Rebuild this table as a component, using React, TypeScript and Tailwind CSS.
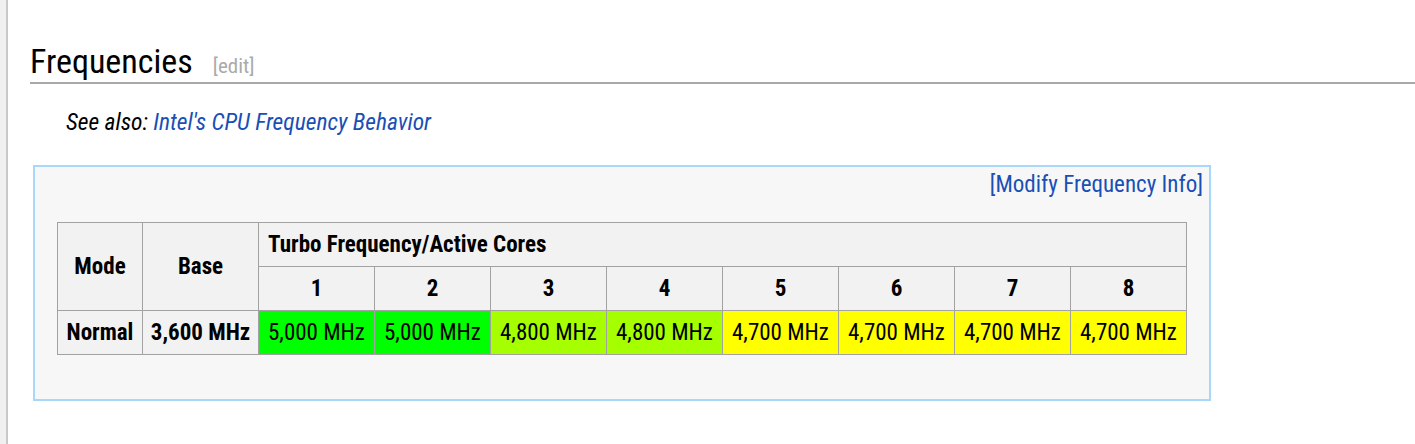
const FONT = { fontFamily: '"Roboto Condensed", Roboto, "Liberation Sans", sans-serif' };

const cores = [
  { n: 1, mhz: '5,000 MHz', bg: 'bg-[#00ff00]' },
  { n: 2, mhz: '5,000 MHz', bg: 'bg-[#00ff00]' },
  { n: 3, mhz: '4,800 MHz', bg: 'bg-[#a6ff00]' },
  { n: 4, mhz: '4,800 MHz', bg: 'bg-[#a6ff00]' },
  { n: 5, mhz: '4,700 MHz', bg: 'bg-[#ffff00]' },
  { n: 6, mhz: '4,700 MHz', bg: 'bg-[#ffff00]' },
  { n: 7, mhz: '4,700 MHz', bg: 'bg-[#ffff00]' },
  { n: 8, mhz: '4,700 MHz', bg: 'bg-[#ffff00]' },
];

export default function App() {
  return (
    <div className="flex min-h-[444px] bg-white text-black" style={FONT}>
      <div className="w-[6px] shrink-0 bg-[#f0f0f0]" />
      <div className="w-[2px] shrink-0 bg-[#c8c8c8]" />
      <div className="flex-1 pl-[22px]">
        <h2 className="mt-[41px] border-b-2 border-[#a8a8a8] pb-[1px] text-[34px] leading-[40px] font-normal">
          Frequencies
          <span className="ml-[20px] text-[21px] leading-none text-[#aaaaaa]">[edit]</span>
        </h2>

        <p className="mt-[24px] pl-[36px] text-[23.5px] leading-[28px] italic">
          See also: <a className="text-[#1a4fb5]">Intel's CPU Frequency Behavior</a>
        </p>

        <div className="mt-[29px] ml-[3px] h-[236px] w-[1178px] border-2 border-[#a7d7f9] bg-[#f7f7f7] pt-[4px]">
          <div className="pr-[6px] text-right text-[23px] leading-[28px] text-[#1a4fb5]">
            [Modify Frequency Info]
          </div>

          <table className="mt-[23px] ml-[22px] table-fixed border-collapse text-[23px] leading-[28px]">
            <colgroup>
              <col className="w-[85px]" />
              <col className="w-[116px]" />
              {cores.map((c) => (
                <col key={c.n} className="w-[116px]" />
              ))}
            </colgroup>
            <thead>
              <tr className="h-[44px] bg-[#f2f2f2]">
                <th rowSpan={2} className="border border-[#a2a2a2] font-bold">Mode</th>
                <th rowSpan={2} className="border border-[#a2a2a2] font-bold">Base</th>
                <th colSpan={8} className="border border-[#a2a2a2] pl-[9px] text-left font-bold">
                  Turbo Frequency/Active Cores
                </th>
              </tr>
              <tr className="h-[44px] bg-[#f2f2f2]">
                {cores.map((c) => (
                  <th key={c.n} className="border border-[#a2a2a2] font-bold">
                    {c.n}
                  </th>
                ))}
              </tr>
            </thead>
            <tbody>
              <tr className="h-[44px]">
                <th className="border border-[#a2a2a2] bg-[#f2f2f2] font-bold">Normal</th>
                <th className="border border-[#a2a2a2] bg-[#f2f2f2] font-bold">3,600 MHz</th>
                {cores.map((c) => (
                  <td key={c.n} className={`border border-[#a2a2a2] text-center ${c.bg}`}>
                    {c.mhz}
                  </td>
                ))}
              </tr>
            </tbody>
          </table>
        </div>
      </div>
    </div>
  );
}
